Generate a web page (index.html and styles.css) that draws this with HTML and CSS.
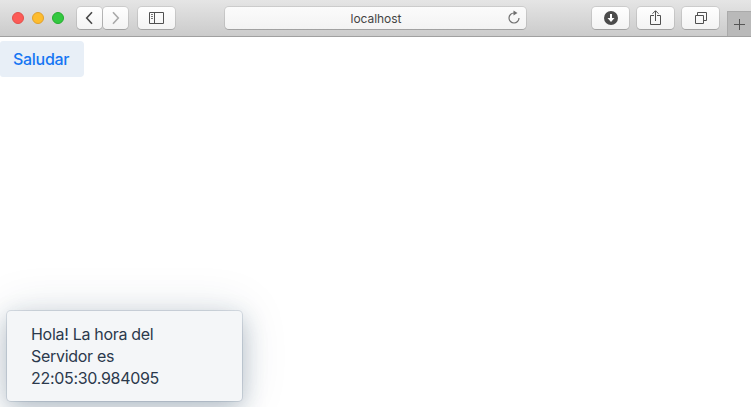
FILE: index.html
```html
<!DOCTYPE html>
<html lang="es">
<head>
<meta charset="utf-8">
<title>localhost</title>
<link rel="stylesheet" href="styles.css">
</head>
<body>
<header class="toolbar">
  <div class="lights"><i class="light red"></i><i class="light yellow"></i><i class="light green"></i></div>
  <div class="history">
    <button class="tool narrow" aria-label="Back"><svg width="25" height="22" viewBox="0 0 25 22"><path d="M15 5.200 9.700 11l5.300 5.800" stroke="#484848" stroke-width="1.6"/></svg></button>
    <button class="tool narrow" aria-label="Forward"><svg width="25" height="22" viewBox="0 0 25 22"><path d="M10 5.200 15.300 11 10 16.800" stroke="#a9a9a9" stroke-width="1.6"/></svg></button>
  </div>
  <button class="tool" aria-label="Sidebar"><svg width="37" height="22" viewBox="0 0 37 22"><path d="M11.500 5.500h14v11h-14zM16.500 5.500v11" stroke="#505050"/><path d="M13 7.500h2M13 9.500h2M13 11.500h2" stroke="#777"/></svg></button>
  <div class="address"><span>localhost</span><svg class="reload" width="14" height="16" viewBox="0 0 14 16"><path d="M7 4A5 5 0 1 0 12 9" stroke="#707070" stroke-width="1.2"/><path d="M6.500 1.500v5L10.500 4z" fill="#707070"/></svg></div>
  <div class="actions">
    <button class="tool" aria-label="Downloads"><svg width="37" height="22" viewBox="0 0 37 22"><circle cx="19" cy="11" r="7" fill="#4b4b4b"/><path d="M19 7v5" stroke="#fff" stroke-width="2"/><path d="M15.500 11h7L19 15z" fill="#fff"/></svg></button>
    <button class="tool" aria-label="Share"><svg width="37" height="22" viewBox="0 0 37 22"><path d="M17 8.500h-3.500v9h10v-9H20M18.500 14V4M15.500 6.700l3-3 3 3" stroke="#505050"/></svg></button>
    <button class="tool" aria-label="Tabs"><svg width="37" height="22" viewBox="0 0 37 22"><path d="M13.500 8.500h8v8h-8zM15.500 8.500v-3h9v8h-3" stroke="#505050"/></svg></button>
  </div>
  <button class="newtab" aria-label="New tab"><svg width="24" height="25" viewBox="0 0 24 25"><path d="M7 13.500h11M12.500 8v11" stroke="#555"/></svg></button>
</header>
<main class="page">
  <button class="greet">Saludar</button>
  <div class="notification">Hola! La hora del<br>Servidor es<br>22:05:30.984095</div>
</main>
</body>
</html>
```

FILE: styles.css
```css
* { box-sizing: border-box; }
body { margin: 0; height: 407px; overflow: hidden; background: #fff; font-family: Inter, "Liberation Sans", sans-serif; display: flex; flex-direction: column; }
button { border: 0; padding: 0; font: inherit; }
svg { display: block; fill: none; }
.toolbar { height: 37px; flex: none; display: flex; align-items: flex-start; padding-top: 7px; padding-left: 12px; background: linear-gradient(#e5e5e5, #cbcbcb); border-bottom: 1px solid #a0a0a0; }
.lights { display: flex; gap: 8px; margin: 5px 13px 0 0; }
.light { width: 12px; height: 12px; border-radius: 50%; }
.red { background: #fc5b57; border: 1px solid #e2504b; }
.yellow { background: #fdbc2e; border: 1px solid #e0a02c; }
.green { background: #33c840; border: 1px solid #24ad2e; }
.history { display: flex; gap: 1px; margin-right: 10px; }
.tool { width: 37px; height: 22px; flex: none; border-radius: 4px; background: linear-gradient(#fefefe, #f3f3f3); box-shadow: 0 0 0 1px rgba(0,0,0,.09), 0 1px 0 rgba(0,0,0,.14); }
.tool.narrow { width: 25px; }
.address { width: 301px; height: 22px; margin-left: 50px; border-radius: 4px; background: linear-gradient(#fbfbfb, #f3f3f3); box-shadow: 0 0 0 1px rgba(0,0,0,.09), 0 1px 0 rgba(0,0,0,.14); position: relative; text-align: center; font-size: 12px; line-height: 23px; color: #444; }
.address span { margin-left: 1px; letter-spacing: -.05px; }
.reload { position: absolute; right: 5px; top: 2px; }
.actions { display: flex; gap: 8px; margin-left: 66px; }
.newtab { width: 24px; height: 25px; margin: 4px 0 0 auto; background: #b9b9b9; box-shadow: inset 1px 1px #aaa; }
.page { flex: 1; display: flex; flex-direction: column; justify-content: space-between; align-items: flex-start; padding: 4px 0 6px; }
.greet { width: 84px; height: 36px; border-radius: 3px 4px 4px 3px; background: #e8eff7; color: #1676f3; font-size: 16px; font-weight: 500; text-align: left; padding-left: 13px; letter-spacing: -.3px; }
.notification { width: 235px; height: 90px; margin-left: 7px; padding: 12px 24px; border-radius: 4px; background: #f4f6f8; box-shadow: 0 0 0 1px rgba(26,57,96,.13), 0 8px 24px rgba(26,57,86,.28), 0 0 48px rgba(26,57,86,.13); color: #2b394c; font-size: 16px; line-height: 22px; letter-spacing: -.3px; white-space: nowrap; }
```
